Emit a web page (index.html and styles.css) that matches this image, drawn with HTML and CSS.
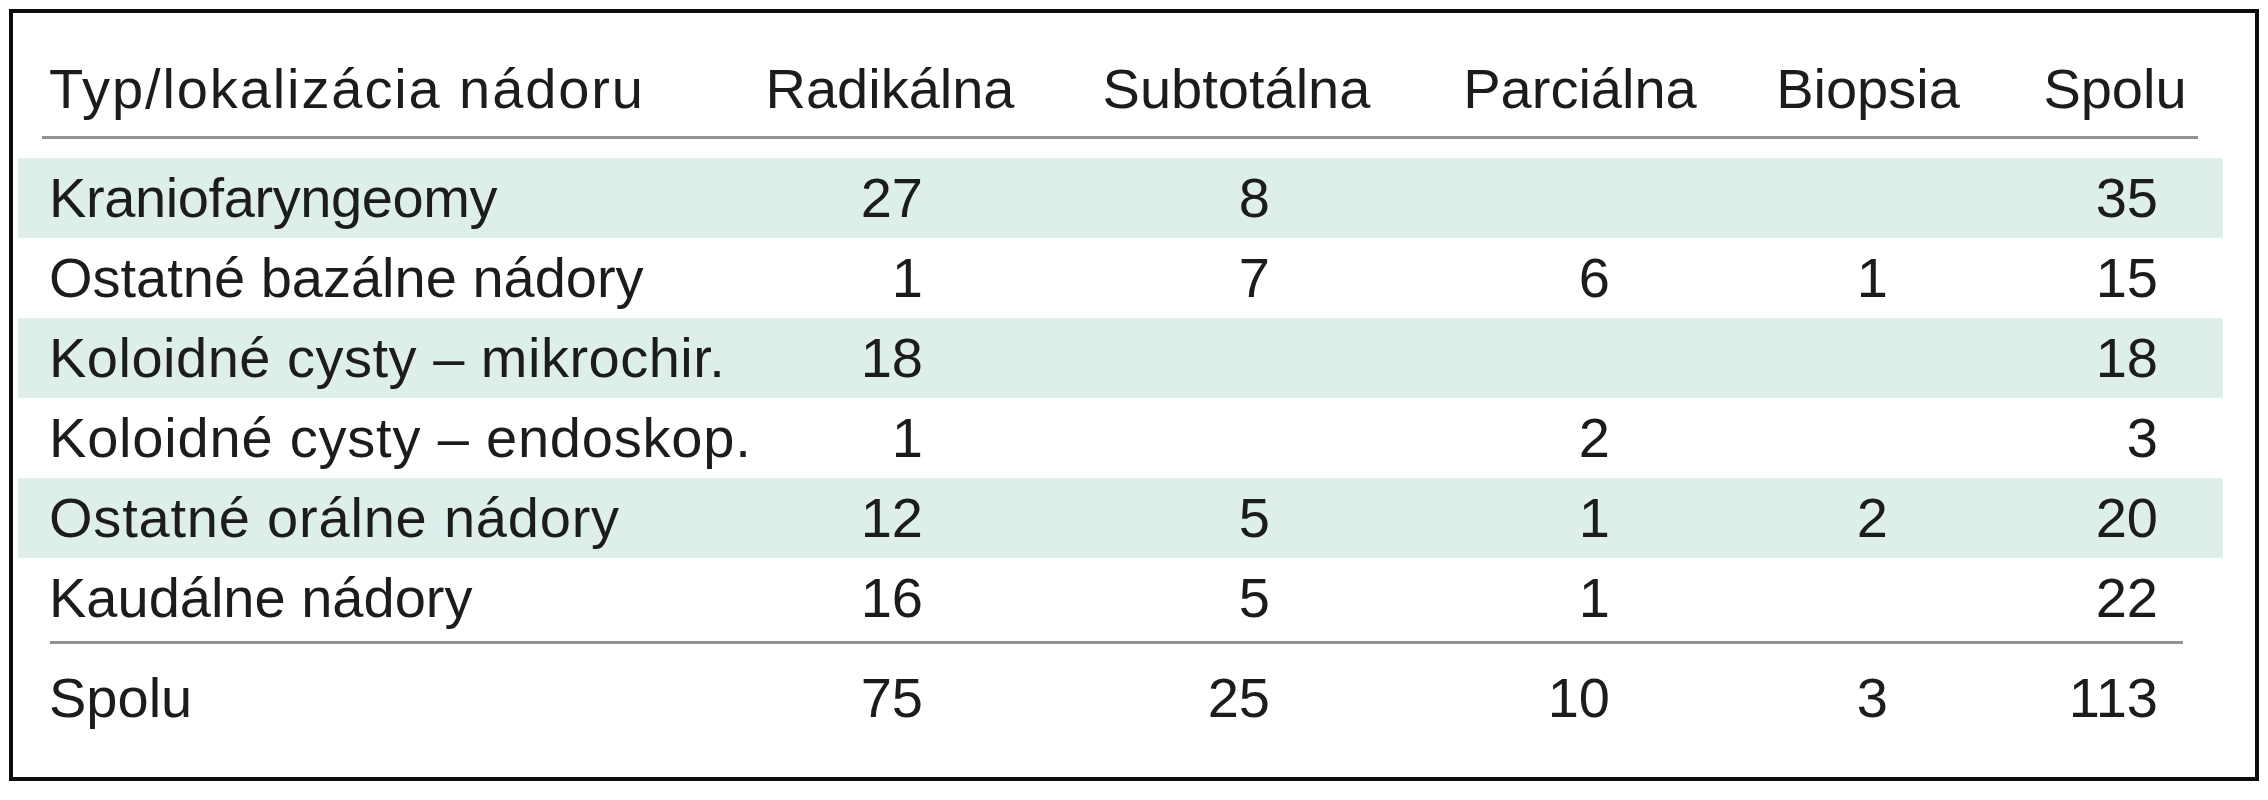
FILE: index.html
```html
<!DOCTYPE html>
<html lang="sk">
<head>
<meta charset="utf-8">
<title>Typ/lokalizácia nádoru</title>
<link rel="stylesheet" href="styles.css">
</head>
<body>
<div class="box">
  <div class="table">
    <div class="row head">
      <div class="label spaced">Typ/lokalizácia nádoru</div>
      <div class="hc c1">Radikálna</div>
      <div class="hc c2">Subtotálna</div>
      <div class="hc c3">Parciálna</div>
      <div class="hc c4">Biopsia</div>
      <div class="hc c5">Spolu</div>
    </div>
    <div class="rule rule-head"></div>
    <div class="body">
      <div class="row shade">
        <div class="label tight">Kraniofaryngeomy</div>
        <div class="num c1">27</div>
        <div class="num c2">8</div>
        <div class="num c3"></div>
        <div class="num c4"></div>
        <div class="num c5">35</div>
      </div>
      <div class="row">
        <div class="label">Ostatné bazálne nádory</div>
        <div class="num c1">1</div>
        <div class="num c2">7</div>
        <div class="num c3">6</div>
        <div class="num c4">1</div>
        <div class="num c5">15</div>
      </div>
      <div class="row shade">
        <div class="label loose">Koloidné cysty – mikrochir.</div>
        <div class="num c1">18</div>
        <div class="num c2"></div>
        <div class="num c3"></div>
        <div class="num c4"></div>
        <div class="num c5">18</div>
      </div>
      <div class="row">
        <div class="label looser">Koloidné cysty – endoskop.</div>
        <div class="num c1">1</div>
        <div class="num c2"></div>
        <div class="num c3">2</div>
        <div class="num c4"></div>
        <div class="num c5">3</div>
      </div>
      <div class="row shade">
        <div class="label looser">Ostatné orálne nádory</div>
        <div class="num c1">12</div>
        <div class="num c2">5</div>
        <div class="num c3">1</div>
        <div class="num c4">2</div>
        <div class="num c5">20</div>
      </div>
      <div class="row">
        <div class="label">Kaudálne nádory</div>
        <div class="num c1">16</div>
        <div class="num c2">5</div>
        <div class="num c3">1</div>
        <div class="num c4"></div>
        <div class="num c5">22</div>
      </div>
    </div>
    <div class="rule rule-foot"></div>
    <div class="row total">
      <div class="label">Spolu</div>
      <div class="num c1">75</div>
      <div class="num c2">25</div>
      <div class="num c3">10</div>
      <div class="num c4">3</div>
      <div class="num c5">113</div>
    </div>
  </div>
</div>
</body>
</html>
```
FILE: styles.css
```css
html, body {
  margin: 0;
  padding: 0;
  background: #ffffff;
}

body {
  font-family: "Liberation Sans", Arial, sans-serif;
  color: #1c1c1c;
}

.box {
  box-sizing: border-box;
  width: 2250px;
  height: 772px;
  margin: 9px 0 0 9px;
  border: 4px solid #0c0c0c;
  background: #ffffff;
}

.table {
  padding: 0 32px 0 5px;
}

.row {
  display: grid;
  grid-template-columns: 667px 348px 345px 342px 234px 207px;
  padding: 0 30px 0 31px;
  font-size: 56px;
  line-height: 80px;
  height: 80px;
  white-space: nowrap;
}

.row.shade {
  background: #ddeeeb;
}

.row.head {
  height: auto;
  padding-top: 36px;
  padding-bottom: 7px;
}

.row.total {
  height: auto;
  padding-top: 14px;
  padding-bottom: 39px;
}

.body {
  margin-top: 19px;
  margin-bottom: 3px;
}

.label.spaced { letter-spacing: 1.9px; }
.label.tight { letter-spacing: -0.4px; }
.label.loose { letter-spacing: 0.5px; }
.label.looser { letter-spacing: 0.8px; }

.hc {
  text-align: center;
}

.hc.c5 {
  padding-left: 53px;
}

.num {
  text-align: right;
}

.num.c1 { padding-right: 141px; }
.num.c2 { padding-right: 139px; }
.num.c3 { padding-right: 141px; }
.num.c4 { padding-right: 97px; }
.num.c5 { padding-right: 34px; }

.rule {
  height: 3px;
  background: #939393;
}

.rule-head {
  margin: 0 25px 0 24px;
}

.rule-foot {
  margin: 0 40px 0 32px;
}
```
